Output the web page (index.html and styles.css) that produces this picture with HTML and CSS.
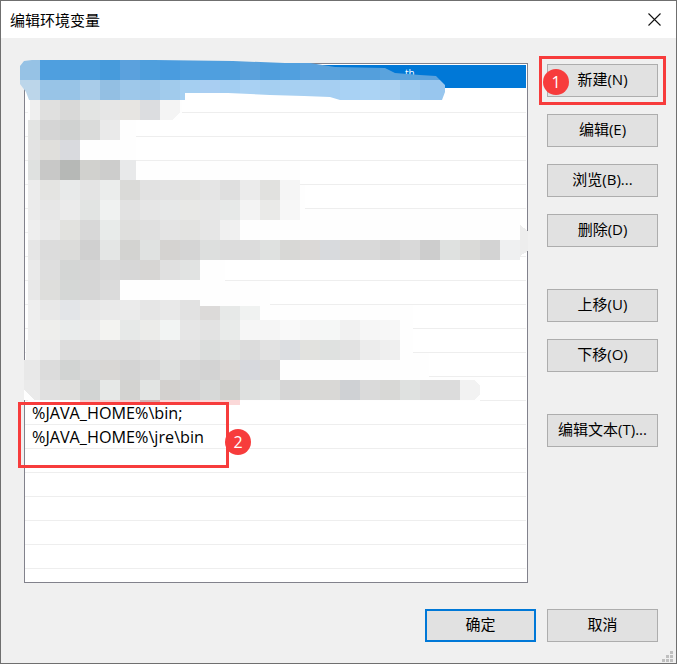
FILE: index.html
```html
<!DOCTYPE html>
<html lang="zh-CN">
<head>
<meta charset="utf-8">
<title>编辑环境变量</title>
<link rel="stylesheet" href="styles.css">
</head>
<body>
<div class="stage">
  <div class="window">
    <header class="titlebar">
      <span class="title">编辑环境变量</span>
      <svg class="close" viewBox="0 0 13 13" width="13" height="13"><path d="M0.5 0.5L12.5 12.5M12.5 0.5L0.5 12.5" stroke="#111" stroke-width="1.1" fill="none"/></svg>
    </header>
    <main class="content">
      <div class="list">
        <div class="row selected"><span class="peek">th</span></div>
        <div class="row"></div><div class="row"></div><div class="row"></div><div class="row"></div>
        <div class="row"></div><div class="row"></div><div class="row"></div><div class="row"></div>
        <div class="row"></div><div class="row"></div><div class="row"></div><div class="row"></div>
        <div class="row"></div>
        <div class="row">%JAVA_HOME%\bin;</div>
        <div class="row">%JAVA_HOME%\jre\bin</div>
        <div class="row"></div><div class="row"></div><div class="row"></div><div class="row"></div><div class="row"></div>
      </div>
      <div class="side">
        <button class="btn">新建(N)</button>
        <button class="btn">编辑(E)</button>
        <button class="btn">浏览(B)...</button>
        <button class="btn">删除(D)</button>
        <button class="btn group">上移(U)</button>
        <button class="btn">下移(O)</button>
        <button class="btn group">编辑文本(T)...</button>
      </div>
    </main>
    <footer class="footer">
      <button class="btn primary">确定</button>
      <button class="btn">取消</button>
    </footer>
    <svg class="grip" viewBox="0 0 11 11" width="11" height="11"><path fill="#bfbfbf" d="M8 0h3v3H8zM4 4h3v3H4zM8 4h3v3H8zM0 8h3v3H0zM4 8h3v3H4zM8 8h3v3H8z"/></svg>
  </div>

  <svg class="mosaic" viewBox="0 0 677 664" width="677" height="664" shape-rendering="crispEdges">
    <defs>
      <clipPath id="blueShape">
        <path d="M20 66L24 61L32 60L155 60L233 61L285 63L310 63L335 67L385 68L395 73L420 75L436 76L445 85L445 92L442 100L340 100L330 97L304 96L270 95L228 93L185 93L185 100L29 100L26 92L20 84Z"/>
      </clipPath>
    </defs>
    <path fill="#fefefe" d="M28 100H182V113H136V161H300V185H305V209H520V257H225V281H270V305H413V353H429V377H480V401H28Z"/>
    <path fill="#ededed" d="M520 225L528 231V251L520 256Z"/>
    <path fill="#f2f2f2" d="M460 380H474L480 386V394L474 400H460Z"/>
    <g clip-path="url(#blueShape)">
      <g class="m" transform="translate(0 60)">
        <rect x="20" fill="#96c2e5"/><rect x="40" fill="#4f9fdf"/><rect x="60" fill="#4e9edd"/><rect x="80" fill="#4f9fdd"/><rect x="100" fill="#479bdc"/><rect x="120" fill="#5ba1dd"/><rect x="140" fill="#4f9fdd"/><rect x="160" fill="#4a9cdf"/><rect x="180" fill="#519fde"/><rect x="200" fill="#4f9fdf"/><rect x="220" fill="#509fdd"/><rect x="240" fill="#5aa1dc"/><rect x="260" fill="#4f9edd"/><rect x="280" fill="#51a0df"/><rect x="300" fill="#5ba2de"/><rect x="320" fill="#5aa2dc"/><rect x="340" fill="#54a0dc"/><rect x="360" fill="#549fdc"/><rect x="380" fill="#5aa3dd"/><rect x="400" fill="#5aa3dd"/><rect x="420" fill="#5ca2dd"/>
      </g>
      <g class="m" transform="translate(0 80)">
        <rect x="20" fill="#bcd6ea"/><rect x="40" fill="#98c4e7"/><rect x="60" fill="#98c4e7"/><rect x="80" fill="#a9cce9"/><rect x="100" fill="#93bfe3"/><rect x="120" fill="#9ec8ea"/><rect x="140" fill="#9cc6e9"/><rect x="160" fill="#a1cbec"/><rect x="180" fill="#a5cff1"/><rect x="200" fill="#a9cef2"/><rect x="220" fill="#a3cef2"/><rect x="240" fill="#a9d1f3"/><rect x="260" fill="#a5cff1"/><rect x="280" fill="#a7d0f2"/><rect x="300" fill="#a8d0f2"/><rect x="320" fill="#a6cff2"/><rect x="340" fill="#a9d2f4"/><rect x="360" fill="#abd3f4"/><rect x="380" fill="#abd1f1"/><rect x="400" fill="#9fcbef"/><rect x="420" fill="#98c6ee"/><rect x="440" fill="#98c6ee"/>
      </g>
    </g>
    <g class="m" transform="translate(0 100)">
      <rect x="30" fill="#efefef"/><rect x="40" fill="#e0e0df"/><rect x="60" fill="#d9d9d8"/><rect x="80" fill="#e3e4e3"/><rect x="100" fill="#e6e6e6"/><rect x="120" fill="#e7e5e2"/><rect x="140" fill="#dcdde0"/><rect x="160" fill="#f4f4f4"/>
    </g>
    <path fill="#fefefe" d="M172 120L180 120L180 112Z"/>
    <g class="m" transform="translate(0 120)">
      <rect x="28" fill="#e3e4e3"/><rect x="40" fill="#d5d5d5"/><rect x="60" fill="#d0d2d1"/><rect x="80" fill="#dadbda"/><rect x="100" fill="#eaeaea"/>
    </g>
    <g class="m" transform="translate(0 140)">
      <rect x="28" fill="#e3e3e3"/><rect x="40" fill="#e0dfdc"/><rect x="60" fill="#d9dade"/>
    </g>
    <g class="m" transform="translate(0 160)">
      <rect x="28" fill="#dfe1e0"/><rect x="40" fill="#c8c8c7"/><rect x="60" fill="#b6b8b6"/><rect x="80" fill="#d1d1ce"/><rect x="100" fill="#cdcdcc"/><rect x="120" class="short" fill="#e8e9ea"/>
    </g>
    <g class="m" transform="translate(0 180)">
      <rect x="28" fill="#ececec"/><rect x="40" fill="#e4e4e2"/><rect x="60" fill="#e8eaea"/><rect x="80" fill="#e4e4e4"/><rect x="100" fill="#ebedec"/><rect x="120" fill="#dadad8"/><rect x="140" fill="#e2e2e2"/><rect x="160" fill="#e3e3e3"/><rect x="180" fill="#e3e3e1"/><rect x="200" fill="#e5e5e5"/><rect x="220" fill="#dfdfdf"/><rect x="240" fill="#ebebeb"/><rect x="260" fill="#e1e1df"/><rect x="280" fill="#f5f5f5"/>
    </g>
    <g class="m" transform="translate(0 200)">
      <rect x="28" fill="#ebebeb"/><rect x="40" fill="#e7e7e7"/><rect x="60" fill="#ebebeb"/><rect x="80" fill="#e2e4e3"/><rect x="100" fill="#f0f2f1"/><rect x="120" fill="#e2e2e2"/><rect x="140" fill="#e6e6e6"/><rect x="160" fill="#e7e8e8"/><rect x="180" fill="#e8e8e6"/><rect x="200" fill="#e7e7e7"/><rect x="220" fill="#e7e9e8"/><rect x="240" fill="#f3f3f3"/><rect x="260" fill="#eaeae8"/><rect x="280" fill="#f7f7f7"/>
    </g>
    <g class="m" transform="translate(0 220)">
      <rect x="28" fill="#eeeeee"/><rect x="40" fill="#e9e9e9"/><rect x="60" fill="#e2e2df"/><rect x="80" fill="#d8d8d8"/><rect x="100" fill="#e8ebea"/><rect x="120" fill="#dfdfdd"/><rect x="140" fill="#e0e0e0"/><rect x="160" fill="#e4e4e4"/><rect x="180" fill="#e3e3e1"/><rect x="200" fill="#e6e6e6"/><rect x="220" fill="#f0f0f0"/>
    </g>
    <g class="m" transform="translate(0 240)">
      <rect x="28" fill="#e6e6e6"/><rect x="40" fill="#dcdcdc"/><rect x="60" fill="#dcdcda"/><rect x="80" fill="#d0d0d0"/><rect x="100" fill="#e4e6e5"/><rect x="120" fill="#d3d3d1"/><rect x="140" fill="#e0e2e1"/><rect x="160" fill="#d5d3d1"/><rect x="180" fill="#d5d5d5"/><rect x="200" fill="#dddfde"/><rect x="220" fill="#dcdcdc"/><rect x="240" fill="#dcdcdc"/><rect x="260" fill="#dfe1e0"/><rect x="280" fill="#d8d8d6"/><rect x="300" fill="#dbd9d7"/><rect x="320" fill="#d8dadd"/><rect x="340" fill="#d9d9d9"/><rect x="360" fill="#d9d9d9"/><rect x="380" fill="#d5d5d5"/><rect x="400" fill="#d9d9d9"/><rect x="420" fill="#cdcdcd"/><rect x="440" fill="#dfe1e0"/><rect x="460" fill="#dadad8"/><rect x="480" fill="#d3d3d3"/><rect x="500" fill="#eff0f1"/>
    </g>
    <g class="m" transform="translate(0 260)">
      <rect x="28" fill="#eaeaea"/><rect x="40" fill="#dedede"/><rect x="60" fill="#d4d6d5"/><rect x="80" fill="#d6d6d6"/><rect x="100" fill="#d9d9d9"/><rect x="120" fill="#d7d7d7"/><rect x="140" fill="#d7d6d4"/><rect x="160" fill="#e0e0e0"/><rect x="180" fill="#e1e3e2"/>
    </g>
    <g class="m" transform="translate(0 280)">
      <rect x="28" fill="#e8e8e8"/><rect x="40" fill="#dededc"/><rect x="60" fill="#d5d7d6"/><rect x="80" fill="#d6d6d6"/><rect x="100" fill="#dbdbdb"/>
    </g>
    <g class="m" transform="translate(0 300)">
      <rect x="28" fill="#eeeeee"/><rect x="40" fill="#e8e8e8"/><rect x="60" fill="#e3e5e8"/><rect x="80" fill="#e8e8e8"/><rect x="100" fill="#eaeaea"/><rect x="120" fill="#ebebeb"/><rect x="140" fill="#e6e6e6"/><rect x="160" fill="#e9e9e9"/><rect x="180" fill="#e2e2e2"/>
    </g>
    <g class="m" transform="translate(0 306)">
      <rect x="200" fill="#dcdad9"/><rect x="220" fill="#e7e9e8"/><rect x="240" fill="#f0f2f1"/>
    </g>
    <g class="m" transform="translate(0 320)">
      <rect x="28" fill="#eeeeee"/><rect x="40" fill="#eeeeec"/><rect x="60" fill="#eaecec"/><rect x="80" fill="#ebebeb"/><rect x="100" fill="#f3f3f1"/><rect x="120" fill="#e7e9e8"/><rect x="140" fill="#ececea"/><rect x="160" fill="#f2f4f3"/><rect x="180" fill="#e6e6e6"/><rect x="200" fill="#e3e3e3"/><rect x="220" fill="#e9ebea"/><rect x="240" fill="#f6f6f6"/><rect x="260" fill="#f5f5f5"/><rect x="280" fill="#f9f9f9"/><rect x="300" fill="#f6f6f6"/><rect x="320" fill="#f5f7f6"/><rect x="340" fill="#f1f1f1"/><rect x="360" fill="#f6f6f6"/><rect x="380" fill="#f7f7f7"/>
    </g>
    <g class="m" transform="translate(0 340)">
      <rect x="26" fill="#f0f0f0"/><rect x="40" fill="#ebebeb"/><rect x="60" fill="#dddddd"/><rect x="80" fill="#dedede"/><rect x="100" fill="#dddddd"/><rect x="120" fill="#dddddd"/><rect x="140" fill="#e0e0e0"/><rect x="160" fill="#e2e2e2"/><rect x="180" fill="#e3e3e3"/><rect x="200" fill="#dcdedd"/><rect x="220" fill="#dfe1e0"/><rect x="240" fill="#dcdcdc"/><rect x="260" fill="#e2e2e2"/><rect x="280" fill="#dcdee1"/><rect x="300" fill="#e2e2df"/><rect x="320" fill="#dfe1e0"/><rect x="340" fill="#e2e2e2"/><rect x="360" fill="#ececec"/><rect x="380" fill="#efefef"/>
    </g>
    <g class="m" transform="translate(0 360)">
      <rect x="24" fill="#e8e8e8"/><rect x="40" fill="#dcdcdc"/><rect x="60" fill="#d2d4d3"/><rect x="80" fill="#d8d8d8"/><rect x="100" fill="#d9d7d5"/><rect x="120" fill="#d4d4d4"/><rect x="140" fill="#d8d8d8"/><rect x="160" fill="#dee0df"/><rect x="180" fill="#d6d6d6"/><rect x="200" fill="#d3d3d3"/><rect x="220" fill="#dbd9d7"/><rect x="240" fill="#d7d9dd"/><rect x="260" fill="#d9d9d9"/>
    </g>
    <g class="m" transform="translate(0 380)">
      <rect x="24" fill="#eaeaea"/><rect x="40" fill="#e0e0e0"/><rect x="60" fill="#dfdfdd"/><rect x="80" fill="#d2d4d3"/><rect x="100" fill="#e6e8e7"/><rect x="120" fill="#d3d3d1"/><rect x="140" fill="#e2e4e3"/><rect x="160" fill="#d3d1cf"/><rect x="180" fill="#d3d3d3"/><rect x="200" fill="#d7d9d8"/><rect x="220" fill="#d0d0cd"/><rect x="240" fill="#dee0df"/><rect x="260" fill="#e0e2e1"/><rect x="280" fill="#d6d6d6"/><rect x="300" fill="#d8d8d6"/><rect x="320" fill="#d9d8d6"/><rect x="340" fill="#cfd1d4"/><rect x="360" fill="#dadada"/><rect x="380" fill="#d8d8d6"/><rect x="400" fill="#dfe1e0"/><rect x="420" fill="#dcdcdc"/><rect x="440" fill="#dcdcdc"/>
    </g>
    <path fill="#f5d3d3" d="M80 400H140V405H80Z"/>
    <path fill="#d5b2b2" d="M140 400H160V405H140Z"/>
    <path fill="#fbd8d8" d="M160 400H240V405H160Z"/>
    <path fill="#fefefe" d="M24 390L34 400H24Z"/>
  </svg>

  <div class="mark mark-new"></div>
  <div class="mark mark-path"></div>
  <div class="badge badge-new">1</div>
  <div class="badge badge-path">2</div>
</div>
</body>
</html>
```
FILE: styles.css
```css
* { box-sizing: border-box; }
html, body { margin: 0; padding: 0; background: #f0f0f0; }
body { font-family: "Open Sans", "Noto Sans CJK SC", sans-serif; color: #000; }

.stage { position: relative; width: 677px; height: 664px; overflow: hidden; }

.window {
  position: relative;
  width: 677px;
  height: 664px;
  border: 1px solid #6f6f6f;
  background: #f0f0f0;
  display: flex;
  flex-direction: column;
}

.titlebar {
  height: 37px;
  background: #fff;
  display: flex;
  align-items: center;
  justify-content: space-between;
  padding: 0 15px 0 9px;
  flex: none;
}
.title { font-family: "Noto Sans CJK SC", sans-serif; font-size: 15px; }
.close { display: block; }

.content { display: flex; padding: 25px 18px 0 23px; flex: none; }

.list {
  width: 504px;
  height: 520px;
  background: #fff;
  border: 1px solid #82828c;
  padding: 1px 0 0 0;
  overflow: hidden;
  flex: none;
}
.row {
  height: 24px;
  margin-right: 1px;
  padding-left: 7px;
  border-bottom: 1px solid #eeeeee;
  font-size: 16.2px;
  line-height: 24px;
  white-space: nowrap;
}
.row.selected { background: #0078d7; border-bottom-color: #0078d7; height: 23px; margin-bottom: 1px; color: #fff; line-height: 17px; font-size: 10px; overflow: hidden; }
.peek { padding-left: 373px; }

.side { display: flex; flex-direction: column; gap: 17px; margin-left: 19px; padding-top: 1px; width: 111px; flex: none; }

.btn {
  display: block;
  width: 111px;
  height: 33px;
  padding: 0 0 3px 0;
  background: #e1e1e1;
  border: 1px solid #adadad;
  border-radius: 0;
  font-family: "Open Sans", "Noto Sans CJK SC", sans-serif;
  font-size: 15px;
  line-height: 26px;
  color: #000;
}
.btn.group { margin-top: 25px; }
.btn.primary { border: 2px solid #0078d7; }

.footer { display: flex; justify-content: flex-end; gap: 11px; padding: 26px 18px 0 0; flex: none; }

.grip { position: absolute; right: 3px; bottom: 1px; }

.mosaic { position: absolute; left: 0; top: 0; }
.m rect { width: 20px; height: 20px; }
.m rect.short { width: 16px; }

.mark { position: absolute; border: 3px solid #f73c3c; }
.mark-new { left: 539px; top: 56px; width: 127px; height: 49px; }
.mark-path { left: 18px; top: 402px; width: 211px; height: 66px; }

.badge {
  position: absolute;
  width: 26px;
  height: 26px;
  border-radius: 50%;
  background: #f73c3c;
  color: #fff;
  font-size: 16px;
  line-height: 26px;
  text-align: center;
}
.badge-new { left: 543px; top: 69px; }
.badge-path { left: 225px; top: 429px; }
```
